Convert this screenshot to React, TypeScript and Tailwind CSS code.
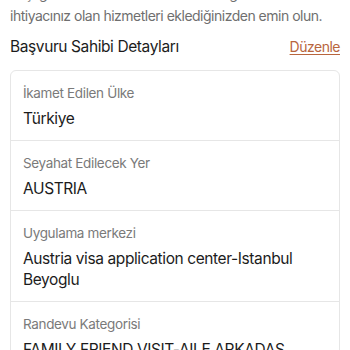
import React from 'react';

const rows = [
  { label: 'İkamet Edilen Ülke', value: 'Türkiye' },
  { label: 'Seyahat Edilecek Yer', value: 'AUSTRIA' },
  { label: 'Uygulama merkezi', value: 'Austria visa application center-Istanbul Beyoglu' },
  { label: 'Randevu Kategorisi', value: 'FAMILY FRIEND VISIT-AILE ARKADAS ZIYARETI' },
];

export default function App() {
  return (
    <div className="h-[350px] w-[350px] overflow-hidden bg-white font-['Inter',sans-serif]">
      <div className="px-[10px]">
        <p className="-mt-[17px] text-[14px] leading-[22px] tracking-[-0.5px] text-[#6f6f6f]">
          seçtiğiniz randevu saatine katılabildiğinizden ve ihtiyacınız olan hizmetleri eklediğinizden emin olun.
        </p>

        <div className="mt-[8px] flex items-center justify-between">
          <h2 className="text-[15.5px] leading-[24px] tracking-[-0.4px] text-[#1c1c1c]">Başvuru Sahibi Detayları</h2>
          <a href="#" className="text-[14px] leading-[24px] tracking-[-0.5px] text-[#b8653d] underline underline-offset-2">
            Düzenle
          </a>
        </div>

        <div className="mt-[11px] rounded-[6px] border border-[#e6e6e6]">
          {rows.map((r, i) => (
            <div key={i} className={`px-3 pt-3 pb-[11px] ${i > 0 ? 'border-t border-[#e6e6e6]' : ''}`}>
              <div className="text-[13.5px] leading-5 tracking-[-0.35px] text-[#7a7a7a]">{r.label}</div>
              <div className="mt-[5px] text-[15.5px] leading-[21px] tracking-[-0.4px] text-[#1c1c1c]">{r.value}</div>
            </div>
          ))}
        </div>
      </div>
    </div>
  );
}
